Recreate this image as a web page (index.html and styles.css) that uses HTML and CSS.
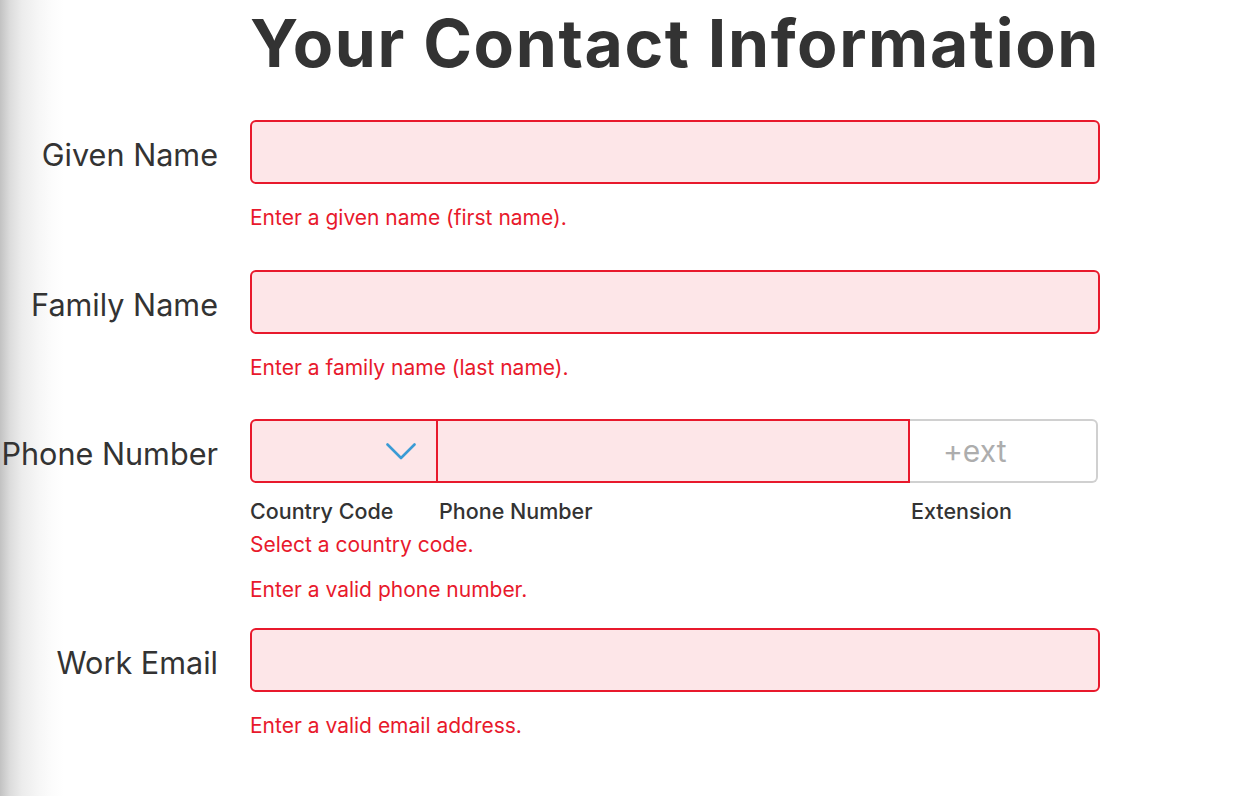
FILE: index.html
```html
<!DOCTYPE html>
<html lang="en">
<head>
<meta charset="utf-8">
<title>Your Contact Information</title>
<link rel="stylesheet" href="styles.css">
</head>
<body>
<div class="page">
  <h1 class="title">Your Contact Information</h1>
  <form class="form">
    <div class="row">
      <label class="label">Given Name</label>
      <div class="field">
        <div class="input error-input"></div>
        <div class="err err-first">Enter a given name (first name).</div>
      </div>
    </div>
    <div class="row row-before-phone">
      <label class="label">Family Name</label>
      <div class="field">
        <div class="input error-input"></div>
        <div class="err err-first">Enter a family name (last name).</div>
      </div>
    </div>
    <div class="row row-phone">
      <label class="label">Phone Number</label>
      <div class="field">
        <div class="phone">
          <div class="cc">
            <svg class="chev" width="30" height="17" viewBox="0 0 30 17"><path d="M1.5 1.5 L15 15 L28.5 1.5" fill="none" stroke="#3a9bd5" stroke-width="2.6" stroke-linecap="round" stroke-linejoin="round"/></svg>
          </div>
          <div class="num"></div>
          <div class="ext">+ext</div>
        </div>
        <div class="sublabels">
          <span class="sl sl-cc">Country Code</span>
          <span class="sl sl-num">Phone Number</span>
          <span class="sl sl-ext">Extension</span>
        </div>
        <div class="err err-sel">Select a country code.</div>
        <div class="err err-phone">Enter a valid phone number.</div>
      </div>
    </div>
    <div class="row">
      <label class="label">Work Email</label>
      <div class="field">
        <div class="input error-input"></div>
        <div class="err err-first">Enter a valid email address.</div>
      </div>
    </div>
  </form>
</div>
</body>
</html>
```
FILE: styles.css
```css
html, body {
  margin: 0;
  padding: 0;
}
body {
  width: 1240px;
  height: 796px;
  overflow: hidden;
  font-family: Inter, "Noto Sans", "Liberation Sans", sans-serif;
  color: #333;
  background: linear-gradient(to right, #c2c2c2 0px, #dcdcdc 10px, #ececec 22px, #f6f6f6 38px, #fcfcfc 52px, #ffffff 64px);
}
.title {
  margin: -2px 0 0 250px;
  width: 850px;
  text-align: center;
  font-size: 66px;
  font-weight: 700;
  line-height: 90px;
  letter-spacing: 1.6px;
  color: #333;
  white-space: nowrap;
}
.form {
  display: flex;
  flex-direction: column;
  margin-top: 32px;
}
.row {
  display: grid;
  grid-template-columns: 218px 850px;
  column-gap: 32px;
  margin-bottom: 40px;
}
.row-before-phone {
  margin-bottom: 39px;
}
.row-phone {
  margin-bottom: 26px;
}
.label {
  height: 64px;
  display: flex;
  align-items: center;
  justify-content: flex-end;
  font-size: 30.6px;
  color: #333;
  white-space: nowrap;
  padding-top: 4px;
  box-sizing: border-box;
}
.input {
  height: 64px;
  box-sizing: border-box;
  border-radius: 6px;
}
.error-input {
  border: 2px solid #e8192c;
  background: #fde6e8;
}
.err {
  color: #e8192c;
  font-size: 21px;
  line-height: 24px;
  white-space: nowrap;
}
.err-first {
  margin-top: 22px;
}
.phone {
  display: flex;
  width: 848px;
  height: 64px;
}
.cc {
  width: 188px;
  box-sizing: border-box;
  border: 2px solid #e8192c;
  border-radius: 6px 0 0 6px;
  background: #fde6e8;
  display: flex;
  align-items: center;
  justify-content: flex-end;
  padding-right: 20px;
}
.chev {
  display: block;
}
.num {
  flex: 1;
  box-sizing: border-box;
  border: 2px solid #e8192c;
  border-left: 0;
  background: #fde6e8;
}
.ext {
  width: 188px;
  box-sizing: border-box;
  border: 2px solid #d0d0d0;
  border-left: 0;
  border-radius: 0 6px 6px 0;
  background: #fff;
  color: #adadad;
  font-size: 30px;
  display: flex;
  align-items: center;
  padding-left: 33px;
}
.sublabels {
  display: flex;
  margin-top: 16px;
  font-size: 21.5px;
  line-height: 24px;
  font-weight: 500;
  color: #333;
}
.sl-cc { width: 189px; }
.sl-num { width: 472px; }
.sl-ext { width: 188px; }
.err-sel {
  margin-top: 10px;
}
.err-phone {
  margin-top: 21px;
}
```
